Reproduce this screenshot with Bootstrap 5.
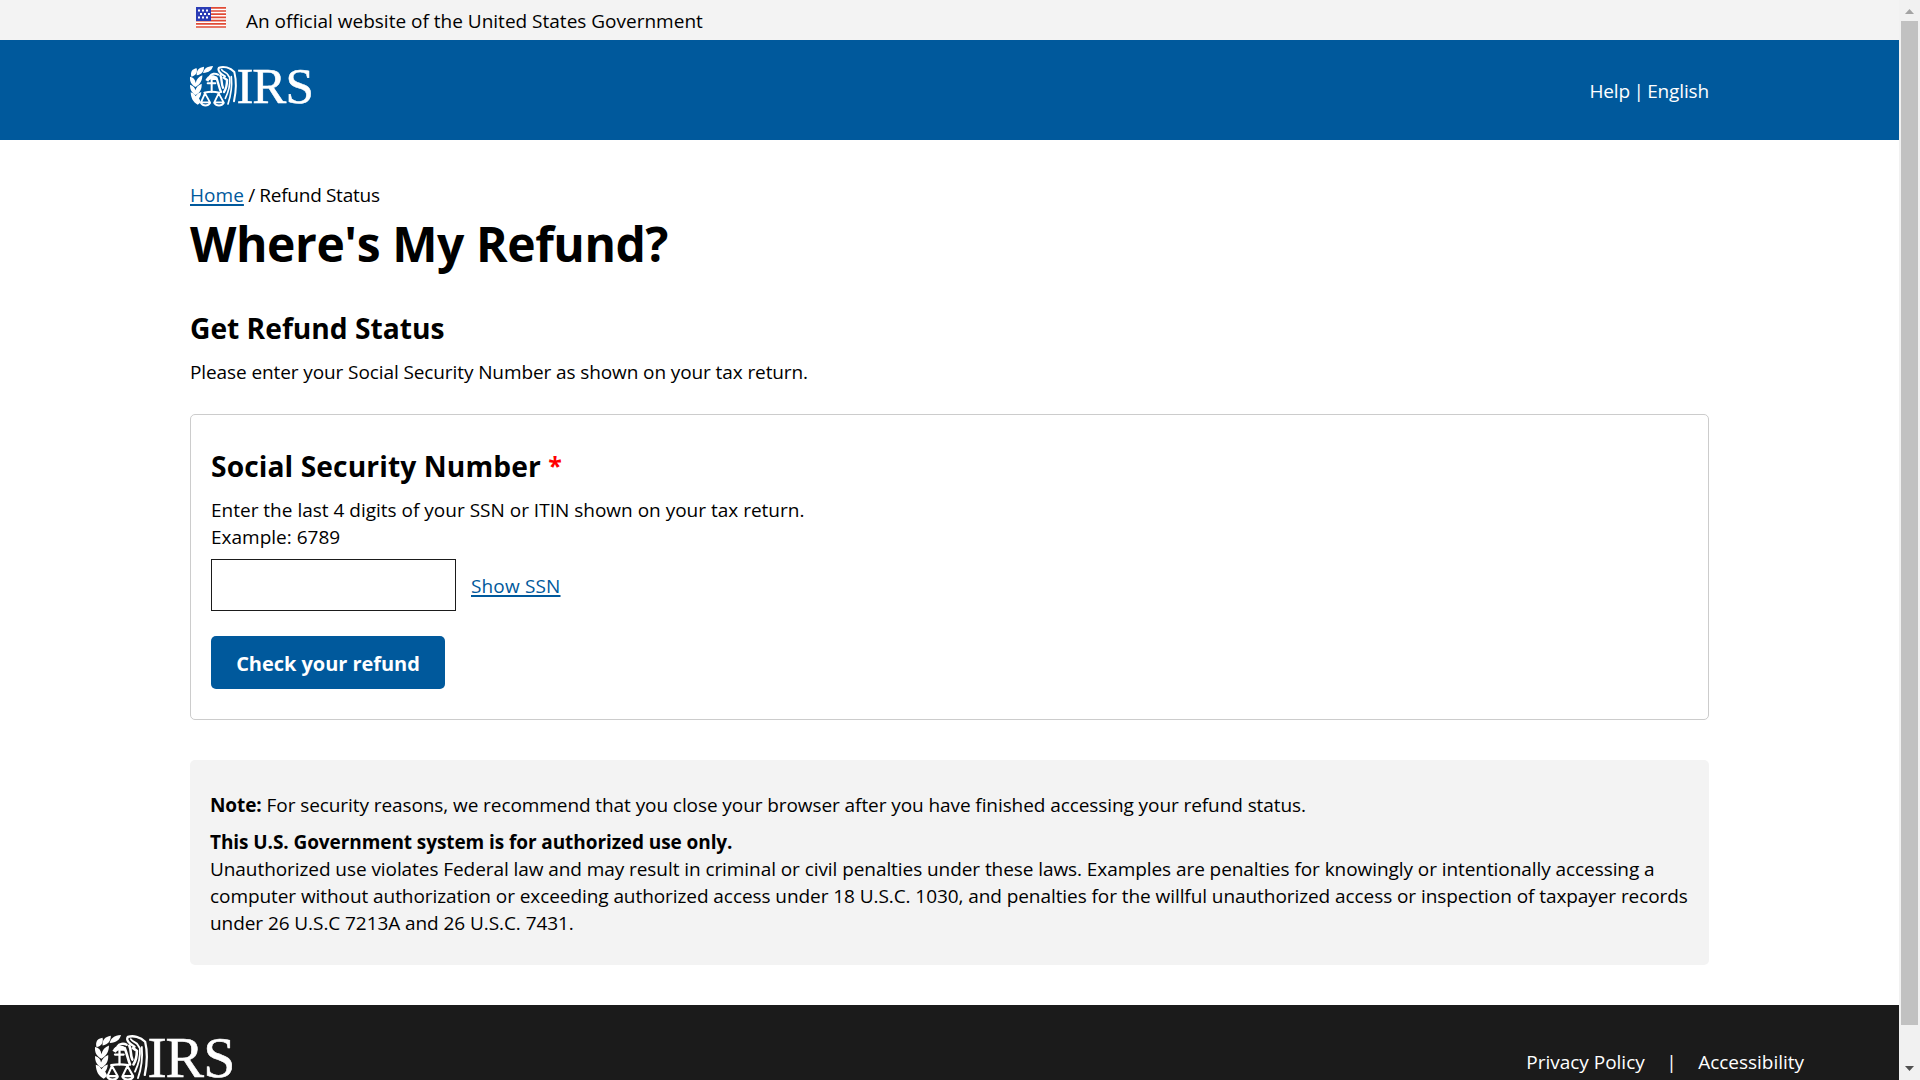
<!DOCTYPE html>
<html lang="en">
<head>
<meta charset="utf-8">
<meta name="viewport" content="width=device-width, initial-scale=1">
<title>Where's My Refund?</title>
<link href="https://cdn.jsdelivr.net/npm/bootstrap@5.3.0/dist/css/bootstrap.min.css" rel="stylesheet">
<style>
  body { font-family: "Open Sans", "Noto Sans", sans-serif; font-size: 19px; line-height: 27px; color: #000; letter-spacing: -.08px; }
  a { color: #00599c; text-underline-offset: 2px; text-decoration-thickness: 2px; }
  .gutter { padding-left: 190px; padding-right: 190px; }
  .gov-banner { height: 40px; background: #f3f3f3; padding-left: 196px; padding-top: 7px; gap: 20px; letter-spacing: 0; }
  .gov-banner span { padding-top: 1px; }
  .site-header { height: 100px; background: #00599c; padding-top: 26px; letter-spacing: -.15px; word-spacing: -1.3px; }
  .site-header .links { padding-top: 12px; }
  .crumbs { padding-top: 42px; letter-spacing: -.2px; word-spacing: -.5px; }
  .crumbs a { letter-spacing: .05px; }
  h1 { font-size: 48px; line-height: 58px; font-weight: 700; letter-spacing: -.42px; margin: 6px 0 38px; }
  h2 { font-size: 28.2px; line-height: 34px; font-weight: 700; letter-spacing: 0; margin: 0 0 14px; }
  .intro { margin-bottom: 28px; letter-spacing: -.1px; }
  .ssn-panel { height: 306px; border: 1px solid #ccc; border-radius: 5px; padding: 34px 20px 0; }
  .ssn-panel h2 { height: 34px; letter-spacing: .1px; }
  .required-star { color: #f00; font-size: 25px; line-height: 1; vertical-align: 2px; }
  .hint { letter-spacing: 0; }
  .ssn-input { width: 245px; height: 52px; border: 1px solid #1b1b1b; border-radius: 0; }
  .ssn-row { margin-top: 8px; gap: 15px; }
  .ssn-row a { padding-top: 2px; letter-spacing: .15px; }
  .btn-refund { margin-top: 25px; width: 234px; height: 53px; background: #00599c; color: #fff; font-size: 20px; font-weight: 700; border-radius: 5px; border: 0; letter-spacing: -.04px; padding: 2px 0 0; }
  .note-panel { height: 205px; margin: 40px 0; background: #f3f3f3; border-radius: 5px; padding: 32px 20px 0; }
  .note-panel p { margin-bottom: 10px; }
  .note-panel div { letter-spacing: -.07px; }
  .site-footer { height: 75px; background: #1b1b1b; padding: 30px 95px 0; }
  .foot-links { padding-top: 14px; gap: 21.5px; letter-spacing: -.02px; }
  .scroll-track { width: 21px; background: #f1f1f1; padding: 9px 0 9px; }
  .scroll-thumb { width: 17px; height: 1004px; background: #c1c1c1; margin-top: 7px; }
  .logo-text { font-family: "Liberation Serif", serif; font-size: 51px; letter-spacing: 0; word-spacing: 0; stroke: #fff; stroke-width: .5; }
</style>
<script src="https://cdn.jsdelivr.net/npm/bootstrap@5.3.0/dist/js/bootstrap.bundle.min.js"></script>
</head>
<body class="d-flex vh-100 overflow-hidden">
<div class="flex-grow-1">
  <div class="gov-banner d-flex align-items-start">
    <svg width="30" height="21" viewBox="0 0 30 21">
      <rect width="30" height="21" fill="#fff"/>
      <path d="M0 .8h30M0 4h30M0 7.2h30M0 10.4h30M0 13.6h30M0 16.8h30M0 20h30" stroke="#e04b36" stroke-width="1.7"/>
      <rect width="15" height="14" fill="#2a3cb5"/>
      <path d="M2 3.5h12M4 7h10M2 10.5h12" stroke="#fff" stroke-width="2" stroke-dasharray="2 2"/>
    </svg>
    <span>An official website of the United States Government</span>
  </div>
  <header class="site-header gutter d-flex justify-content-between align-items-start">
    <svg width="124" height="41" viewBox="0 0 124 41" class="overflow-visible">
      <g id="irs-emblem">
        <g transform="scale(.3333) translate(-6 -12)" fill="#fff">
          <!-- laurel branch -->
          <path d="M10 44C6 29 13 21 26 19c3 14-3 22-16 25z"/>
          <path d="M26 40c-1-15 6-23 22-26 0 14-7 23-22 26z"/>
          <path d="M45 33c3-13 11-19 30-21-3 12-12 20-30 21z"/>
          <path d="M6 44c10 2 16 8 17 19 3-11 9-19 20-23 0 16-6 27-20 35C10 68 5 59 6 44z"/>
          <path d="M6 68c10 3 15 9 16 17 3-10 9-16 19-20 1 15-4 26-18 34C11 92 6 83 6 68z"/>
          <path d="M8 91c9 2 13 7 15 12 4-7 9-11 17-13-1 10-4 15-7 19l5 10c-2 4-5 7-9 9C15 120 9 109 8 91z"/>
          <!-- eagle and scales -->
          <path d="M52 54c4-5 6-12 15-13 6-2 15-1 19 5l-1 8H72c-4-3-9 0-11 5z"/>
          <g fill="none" stroke="#fff" stroke-linecap="round" stroke-linejoin="round">
            <path d="M71 54v36M59 64h23M66 42c4-7 16-9 24-4" stroke-width="6"/>
            <path d="M49 92c14-3 31-3 45 0" stroke-width="6"/>
            <path d="M51 94l-12 27h27zM92 94l-13 27h28z" stroke-width="5.5"/>
            <path d="M39 123c6 10 21 10 27 0M79 123c6 10 22 10 28 0" stroke-width="6"/>
            <path d="M111 43C98 36 87 26 93 17c14-4 33-1 46 13 6 24 5 60 -1 88" stroke-width="6"/>
            <path d="M85 47c6 15 8 29 14 43M97 40c6 12 2 24 8 37M107 47l10 7c0 18-2 26-9 36" stroke-width="7"/>
            <path d="M101 23c5 9 15 7 19 16l5 8c2 25-3 42-13 62" stroke-width="5"/>
            <path d="M130 44c3 32-1 56-10 82" stroke-width="5"/>
          </g>
        </g>
      </g>
      <text class="logo-text" x="46.4 62.3 95.6" y="37" fill="#fff">IRS</text>
    </svg>
    <div class="links text-white">Help | English</div>
  </header>
  <main class="gutter">
    <div class="crumbs"><a href="#">Home</a> / Refund Status</div>
    <h1>Where's My Refund?</h1>
    <h2>Get Refund Status</h2>
    <p class="intro">Please enter your Social Security Number as shown on your tax return.</p>
    <section class="ssn-panel">
      <h2>Social Security Number <span class="required-star">*</span></h2>
      <div class="hint">Enter the last 4 digits of your SSN or ITIN shown on your tax return.<br>Example: 6789</div>
      <div class="ssn-row d-flex align-items-center">
        <input class="ssn-input" type="password" aria-label="Social Security Number">
        <a href="#">Show SSN</a>
      </div>
      <button class="btn btn-refund d-block" type="button">Check your refund</button>
    </section>
    <section class="note-panel">
      <p><b>Note:</b> For security reasons, we recommend that you close your browser after you have finished accessing your refund status.</p>
      <b>This U.S. Government system is for authorized use only.</b>
      <div>Unauthorized use violates Federal law and may result in criminal or civil penalties under these laws. Examples are penalties for knowingly or intentionally accessing a computer without authorization or exceeding authorized access under 18 U.S.C. 1030, and penalties for the willful unauthorized access or inspection of taxpayer records under 26 U.S.C 7213A and 26 U.S.C. 7431.</div>
    </section>
  </main>
  <footer class="site-footer d-flex justify-content-between align-items-start">
    <svg width="140.3" height="46.4" viewBox="0 0 124 41" class="overflow-visible">
      <use href="#irs-emblem"/>
      <text class="logo-text" x="46.4 62.3 95.6" y="37" fill="#fff">IRS</text>
    </svg>
    <div class="foot-links d-flex text-white"><span>Privacy Policy</span><span>|</span><span>Accessibility</span></div>
  </footer>
</div>
<div class="scroll-track d-flex flex-column align-items-center flex-shrink-0">
  <svg width="9" height="5"><path d="M0 5L4.5 0 9 5z" fill="#a3a3a3"/></svg>
  <div class="scroll-thumb flex-shrink-0"></div>
  <svg width="9" height="5" class="mt-auto"><path d="M0 0L4.5 5 9 0z" fill="#505050"/></svg>
</div>
</body>
</html>
